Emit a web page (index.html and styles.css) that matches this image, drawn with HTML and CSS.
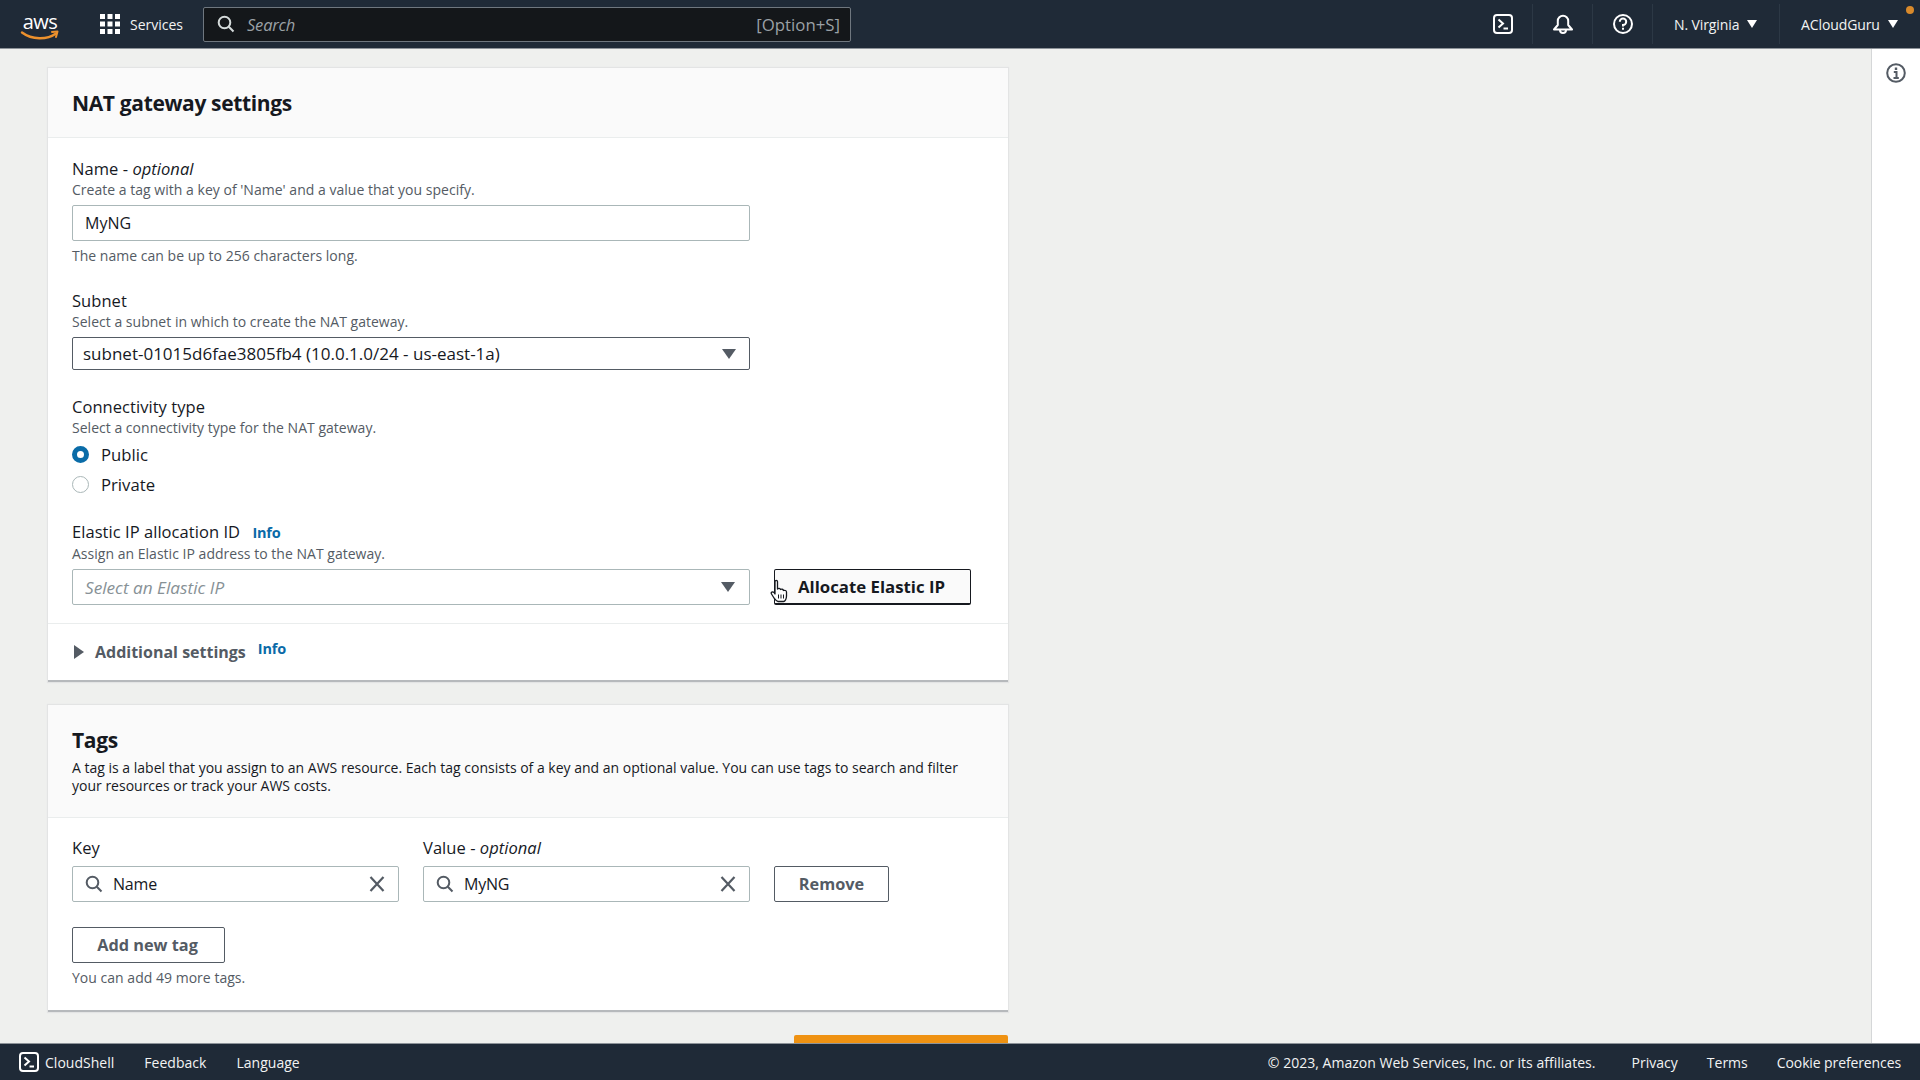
FILE: index.html
```html
<!DOCTYPE html>
<html lang="en">
<head>
<meta charset="utf-8">
<title>NAT gateway settings</title>
<link rel="stylesheet" href="styles.css">
</head>
<body>
<header class="topbar">
  <div class="logo-cell">
    <svg class="aws" width="40" height="36" viewBox="0 -6 40 36">
      <text x="20" y="17" text-anchor="middle" class="aws-text">aws</text>
      <path d="M2 20.500 C12 28 27 28 36 21.500" fill="none" stroke="#ec912d" stroke-width="2.400" stroke-linecap="round"/>
      <path d="M32 20 L37.500 19.600 L36 25" fill="none" stroke="#ec912d" stroke-width="2" stroke-linecap="round" stroke-linejoin="round"/>
    </svg>
  </div>
  <div class="services">
    <svg width="20" height="20" viewBox="0 0 20 20" fill="#fff">
      <rect x="0" y="0" width="5" height="5"/><rect x="7.500" y="0" width="5" height="5"/><rect x="15" y="0" width="5" height="5"/>
      <rect x="0" y="7.500" width="5" height="5"/><rect x="7.500" y="7.500" width="5" height="5"/><rect x="15" y="7.500" width="5" height="5"/>
      <rect x="0" y="15" width="5" height="5"/><rect x="7.500" y="15" width="5" height="5"/><rect x="15" y="15" width="5" height="5"/>
    </svg>
    <span>Services</span>
  </div>
  <div class="searchbar">
    <svg class="glass" width="18" height="18" viewBox="0 0 18 18" fill="none" stroke="#d5dbdb" stroke-width="2"><circle cx="7.500" cy="7.500" r="5.800"/><path d="M11.800 11.800 L16.500 16.500"/></svg>
    <span class="search-ph">Search</span>
    <span class="search-key">[Option+S]</span>
  </div>
  <div class="nav-right">
    <div class="nav-icon">
      <svg width="20" height="20" viewBox="0 0 20 20" fill="none" stroke="#fff" stroke-width="2"><rect x="1" y="1" width="18" height="18" rx="3"/><path d="M5.500 5.500 L10 9.500 L5.500 13.500"/><path d="M10.500 14.500 H15"/></svg>
    </div>
    <div class="nav-icon">
      <svg width="20" height="20" viewBox="0 0 20 20" fill="none" stroke="#fff" stroke-width="2" stroke-linejoin="round"><path d="M1 15.500 L4.800 11 V7 A5.200 5.200 0 0 1 15.200 7 V11 L19 15.500 Z"/><path d="M7 16 A3 3 0 0 0 13 16"/></svg>
    </div>
    <div class="nav-icon">
      <svg width="20" height="20" viewBox="0 0 20 20" fill="none" stroke="#fff" stroke-width="2"><circle cx="10" cy="10" r="9"/><path d="M6.800 7.800 A3.200 3.200 0 1 1 10 11 V12.500"/><path d="M10 13.800 V15.800"/></svg>
    </div>
    <div class="nav-menu region"><span>N. Virginia</span><i class="caret"></i></div>
    <div class="nav-menu account"><span>ACloudGuru</span><i class="caret"></i></div>
  </div>
  <i class="notify-dot"></i>
</header>

<div class="body-row">
  <main class="content">
    <section class="card">
      <div class="card-head first">
        <h2>NAT gateway settings</h2>
      </div>
      <div class="card-body">
        <div class="field name-field">
          <label>Name - <em>optional</em></label>
          <p class="desc">Create a tag with a key of 'Name' and a value that you specify.</p>
          <div class="input wide"><span>MyNG</span></div>
          <p class="desc hint">The name can be up to 256 characters long.</p>
        </div>
        <div class="field subnet-field">
          <label>Subnet</label>
          <p class="desc">Select a subnet in which to create the NAT gateway.</p>
          <div class="select wide dark"><span>subnet-01015d6fae3805fb4 (10.0.1.0/24 - us-east-1a)</span><i class="drop"></i></div>
        </div>
        <div class="field conn-field">
          <label>Connectivity type</label>
          <p class="desc">Select a connectivity type for the NAT gateway.</p>
          <div class="radio-row"><i class="radio on"></i><span>Public</span></div>
          <div class="radio-row"><i class="radio"></i><span>Private</span></div>
        </div>
        <div class="field eip-field">
          <label>Elastic IP allocation ID <a class="info">Info</a></label>
          <p class="desc">Assign an Elastic IP address to the NAT gateway.</p>
          <div class="eip-row">
            <div class="input wide select-ph"><span>Select an Elastic IP</span><i class="drop"></i></div>
            <div class="btn allocate">
              Allocate Elastic IP
              <svg class="cursor" width="18" height="24" viewBox="0 0 18 24"><path d="M5 2.500 C5 1 7.500 1 7.500 2.500 V10 C8.500 9 10 9 10.500 10.500 C11.500 10 13 10 13.500 11.500 C14.500 11 16.500 11.500 16.500 13 V17 C16.500 20 15 22.500 13.500 22.500 H8 C6.500 22.500 5.500 21 4 19 L1.500 15 C0.500 13.500 2.500 12 4 13.500 L5 15 Z" fill="#fff" stroke="#16191f" stroke-width="1.300" stroke-linejoin="round"/><path d="M8.500 15.500 V19.500 M11 15.500 V19.500 M13.500 15.500 V19.500" stroke="#16191f" stroke-width="1"/></svg>
            </div>
          </div>
        </div>
      </div>
      <div class="additional">
        <i class="tri"></i><strong>Additional settings</strong><a class="info raised">Info</a>
      </div>
    </section>

    <section class="card tags">
      <div class="card-head">
        <h2>Tags</h2>
        <p>A tag is a label that you assign to an AWS resource. Each tag consists of a key and an optional value. You can use tags to search and filter your resources or track your AWS costs.</p>
      </div>
      <div class="card-body tags-body">
        <div class="tag-row">
          <div class="tag-col">
            <label>Key</label>
            <div class="input tag-input">
              <svg width="18" height="18" viewBox="0 0 18 18" fill="none" stroke="#545b64" stroke-width="2"><circle cx="7.500" cy="7.500" r="5.800"/><path d="M11.800 11.800 L16.500 16.500"/></svg>
              <span>Name</span>
              <svg class="x" width="16" height="16" viewBox="0 0 16 16" fill="none" stroke="#545b64" stroke-width="2.200"><path d="M1.500 1 L14.500 15 M14.500 1 L1.500 15"/></svg>
            </div>
          </div>
          <div class="tag-col">
            <label>Value - <em>optional</em></label>
            <div class="input tag-input">
              <svg width="18" height="18" viewBox="0 0 18 18" fill="none" stroke="#545b64" stroke-width="2"><circle cx="7.500" cy="7.500" r="5.800"/><path d="M11.800 11.800 L16.500 16.500"/></svg>
              <span>MyNG</span>
              <svg class="x" width="16" height="16" viewBox="0 0 16 16" fill="none" stroke="#545b64" stroke-width="2.200"><path d="M1.500 1 L14.500 15 M14.500 1 L1.500 15"/></svg>
            </div>
          </div>
          <div class="btn remove">Remove</div>
        </div>
        <div class="btn add">Add new tag</div>
        <p class="desc more">You can add 49 more tags.</p>
      </div>
    </section>

    <div class="primary-row"><div class="primary"></div></div>
  </main>
  <aside class="side">
    <svg width="20" height="20" viewBox="0 0 20 20" fill="none" stroke="#545b64" stroke-width="2"><circle cx="10" cy="10" r="8.800"/><path d="M10 4.500 V7" stroke-width="2.400"/><path d="M7.800 9 H10.500 V14.500 M7.500 15 H12.800" stroke-width="2"/></svg>
  </aside>
</div>

<footer class="footer">
  <div class="foot-left">
    <svg width="20" height="20" viewBox="0 0 20 20" fill="none" stroke="#fff" stroke-width="2"><rect x="1" y="1" width="18" height="18" rx="3"/><path d="M5.500 5.500 L10 9.500 L5.500 13.500"/><path d="M10.500 14.500 H15"/></svg>
    <span class="cs">CloudShell</span>
    <span class="fb">Feedback</span>
    <span>Language</span>
  </div>
  <div class="foot-right">
    <span class="copy">© 2023, Amazon Web Services, Inc. or its affiliates.</span>
    <span>Privacy</span>
    <span>Terms</span>
    <span class="cookie">Cookie preferences</span>
  </div>
</footer>
</body>
</html>
```

FILE: styles.css
```css
* { box-sizing: border-box; }
html, body { margin: 0; height: 100%; }
body {
  display: flex; flex-direction: column; height: 100vh; overflow: hidden;
  font-family: "Open Sans", "Noto Sans", Arial, sans-serif;
  font-size: 16px; color: #16191f; background: #eff0ee;
}
p, h2 { margin: 0; }

.topbar {
  position: relative;
  flex: 0 0 49px; display: flex; align-items: center;
  background: #1f2a37; color: #fff; border-bottom: 1px solid #8d9399;
}
.logo-cell { width: 80px; padding-left: 20px; display: flex; }
.aws-text { font: 20px "Open Sans", sans-serif; fill: #fff; letter-spacing: -0.5px; }
.services { display: flex; align-items: center; gap: 10px; width: 123px; padding-left: 20px; font-size: 14px; color: #f2f3f3; }
.services span { letter-spacing: 0; }
.searchbar {
  width: 648px; height: 35px; display: flex; align-items: center;
  background: #14171a; border: 1px solid #6f777f; border-radius: 2px; padding: 0 10px 0 13px;
}
.search-ph { margin-left: 12px; font-style: italic; font-size: 16.500px; color: #9ba1a6; flex: 1; letter-spacing: -0.2px; }
.search-key { font-size: 16.800px; color: #9ba1a6; letter-spacing: 0; }
.nav-right { margin-left: auto; display: flex; align-items: center; height: 48px; padding-right: 17px; }
.nav-icon { width: 60px; height: 40px; display: flex; align-items: center; justify-content: center; border-right: 1px solid #2c3845; }
.nav-menu { display: flex; align-items: center; gap: 8px; font-size: 14px; color: #f2f3f3; height: 40px; white-space: nowrap; letter-spacing: -0.1px; }
.region { width: 127px; padding-left: 21px; border-right: 1px solid #2c3845; }
.account { width: 123px; padding-left: 21px; }
.caret { width: 0; height: 0; border-left: 5.500px solid transparent; border-right: 5.500px solid transparent; border-top: 8px solid #fff; }
.notify-dot { position: absolute; top: 6px; right: 6px; width: 8px; height: 8px; border-radius: 50%; background: #d98a2b; }

.body-row { flex: 1; display: flex; min-height: 0; }
.content { flex: 1; min-width: 0; overflow: hidden; padding: 19px 0 0 48px; }
.side { width: 49px; background: #fff; border-left: 1px solid #d5d7d8; display: flex; justify-content: center; padding-top: 14px; align-items: flex-start; }

.card { width: 960px; background: #fff; border-bottom: 2px solid #b6b9bc; box-shadow: 0 0 1px 1px #e3e4e4; }
.card-head { background: #fafafa; border-bottom: 1px solid #eaeded; padding: 22px 24px 18px; }
.card-head.first { height: 70px; }
.card-head h2 { font-size: 21px; font-weight: 700; line-height: 26px; letter-spacing: -0.35px; }
.card-head p { font-size: 14px; line-height: 18px; margin-top: 6px; width: 900px; letter-spacing: 0; color: #16191f; }
.card-body { padding: 20px 24px 0; }

label { display: block; font-size: 16.500px; line-height: 21px; padding-bottom: 2px; letter-spacing: 0.05px; }
.desc { font-size: 14px; line-height: 18px; color: #545b64; letter-spacing: 0.02px; }
.info { color: #0a6aa8; font-size: 14.500px; font-weight: 700; margin-left: 8px; letter-spacing: -0.2px; }

.input, .select { display: flex; align-items: center; background: #fff; border: 1px solid #aab7b8; border-radius: 2px; font-size: 16px; }
.wide { width: 678px; flex: none; }
.input.wide { height: 36px; padding: 0 12px; }
.name-field .input { margin-top: 6px; }
.hint { margin-top: 6px; }
.subnet-field { margin-top: 25px; }
.subnet-field .select { height: 33px; margin-top: 6px; padding: 0 13px 0 10px; border-color: #545b64; justify-content: space-between; font-size: 17px; }
.drop { width: 0; height: 0; border-left: 7px solid transparent; border-right: 7px solid transparent; border-top: 10px solid #545b64; }
.conn-field { margin-top: 26px; }
.radio-row { display: flex; align-items: center; gap: 12px; height: 30.500px; font-size: 16.700px; }
.conn-field .desc + .radio-row { margin-top: 2px; }
.radio { width: 17px; height: 17px; border-radius: 50%; border: 1px solid #aab7b8; background: #fff; }
.radio.on { border: 5px solid #0a6ca8; }
.eip-field { margin-top: 21px; }
.eip-row { display: flex; gap: 24px; margin-top: 6px; }
.select-ph { justify-content: space-between; color: #879196; font-style: italic; font-size: 17.200px; padding-right: 14px !important; }

.btn { display: flex; align-items: center; justify-content: center; height: 36px; border: 1px solid #545b64; border-radius: 2px; font-size: 16.300px; font-weight: 700; background: #fff; color: #545b64; letter-spacing: 0; }
.allocate { position: relative; width: 197px; background: #fafafa; color: #16191f; border-color: #16191f; border-bottom-width: 2px; font-size: 16.800px; padding-right: 2px; }
.cursor { position: absolute; left: -5px; top: 9px; }
.additional { display: flex; align-items: center; height: 57px; margin-top: 18px; padding: 0 24px; border-top: 1px solid #eaeded; }
.additional strong { font-size: 16px; font-weight: 700; color: #545b64; margin-left: 11px; letter-spacing: 0; }
.tri { width: 0; height: 0; border-top: 7px solid transparent; border-bottom: 7px solid transparent; border-left: 10px solid #545b64; margin-left: 2px; }
.info.raised { margin-left: 12px; margin-top: -8px; }

.tags { margin-top: 23px; }
.tags .card-head { padding: 22px 24px 15px; height: 113px; }
.tags-body { padding: 19px 24px 23px; }
.tag-row { display: flex; gap: 24px; align-items: flex-end; }
.tag-col { width: 327px; }
.tag-col label { margin-bottom: 6px; }
.tag-input { height: 36px; padding: 0 13px 0 12px; gap: 10px; }
.tag-input span { flex: 1; letter-spacing: -0.2px; }
.remove { width: 115px; }
.add { width: 153px; margin-top: 25px; padding-right: 2px; }
.more { margin-top: 6px; }

.primary-row { display: flex; width: 960px; justify-content: flex-end; margin-top: 23px; }
.primary { width: 214px; height: 36px; border-radius: 2px 2px 0 0; background: #ef9212; }

.footer {
  flex: 0 0 37px; display: flex; align-items: center; justify-content: space-between;
  background: #1f2a37; color: #f2f3f3; font-size: 14px; border-top: 1px solid #8d9399; padding: 0 19px; letter-spacing: 0.02px;
}
.foot-left, .foot-right { display: flex; align-items: center; }
.cs { margin-left: 6px; margin-right: 30px; }
.fb { margin-right: 30px; }
.foot-right span { margin-left: 29px; }
.foot-right .copy { margin-right: 7px; }
.foot-right .cookie { letter-spacing: -0.11px; }
```
